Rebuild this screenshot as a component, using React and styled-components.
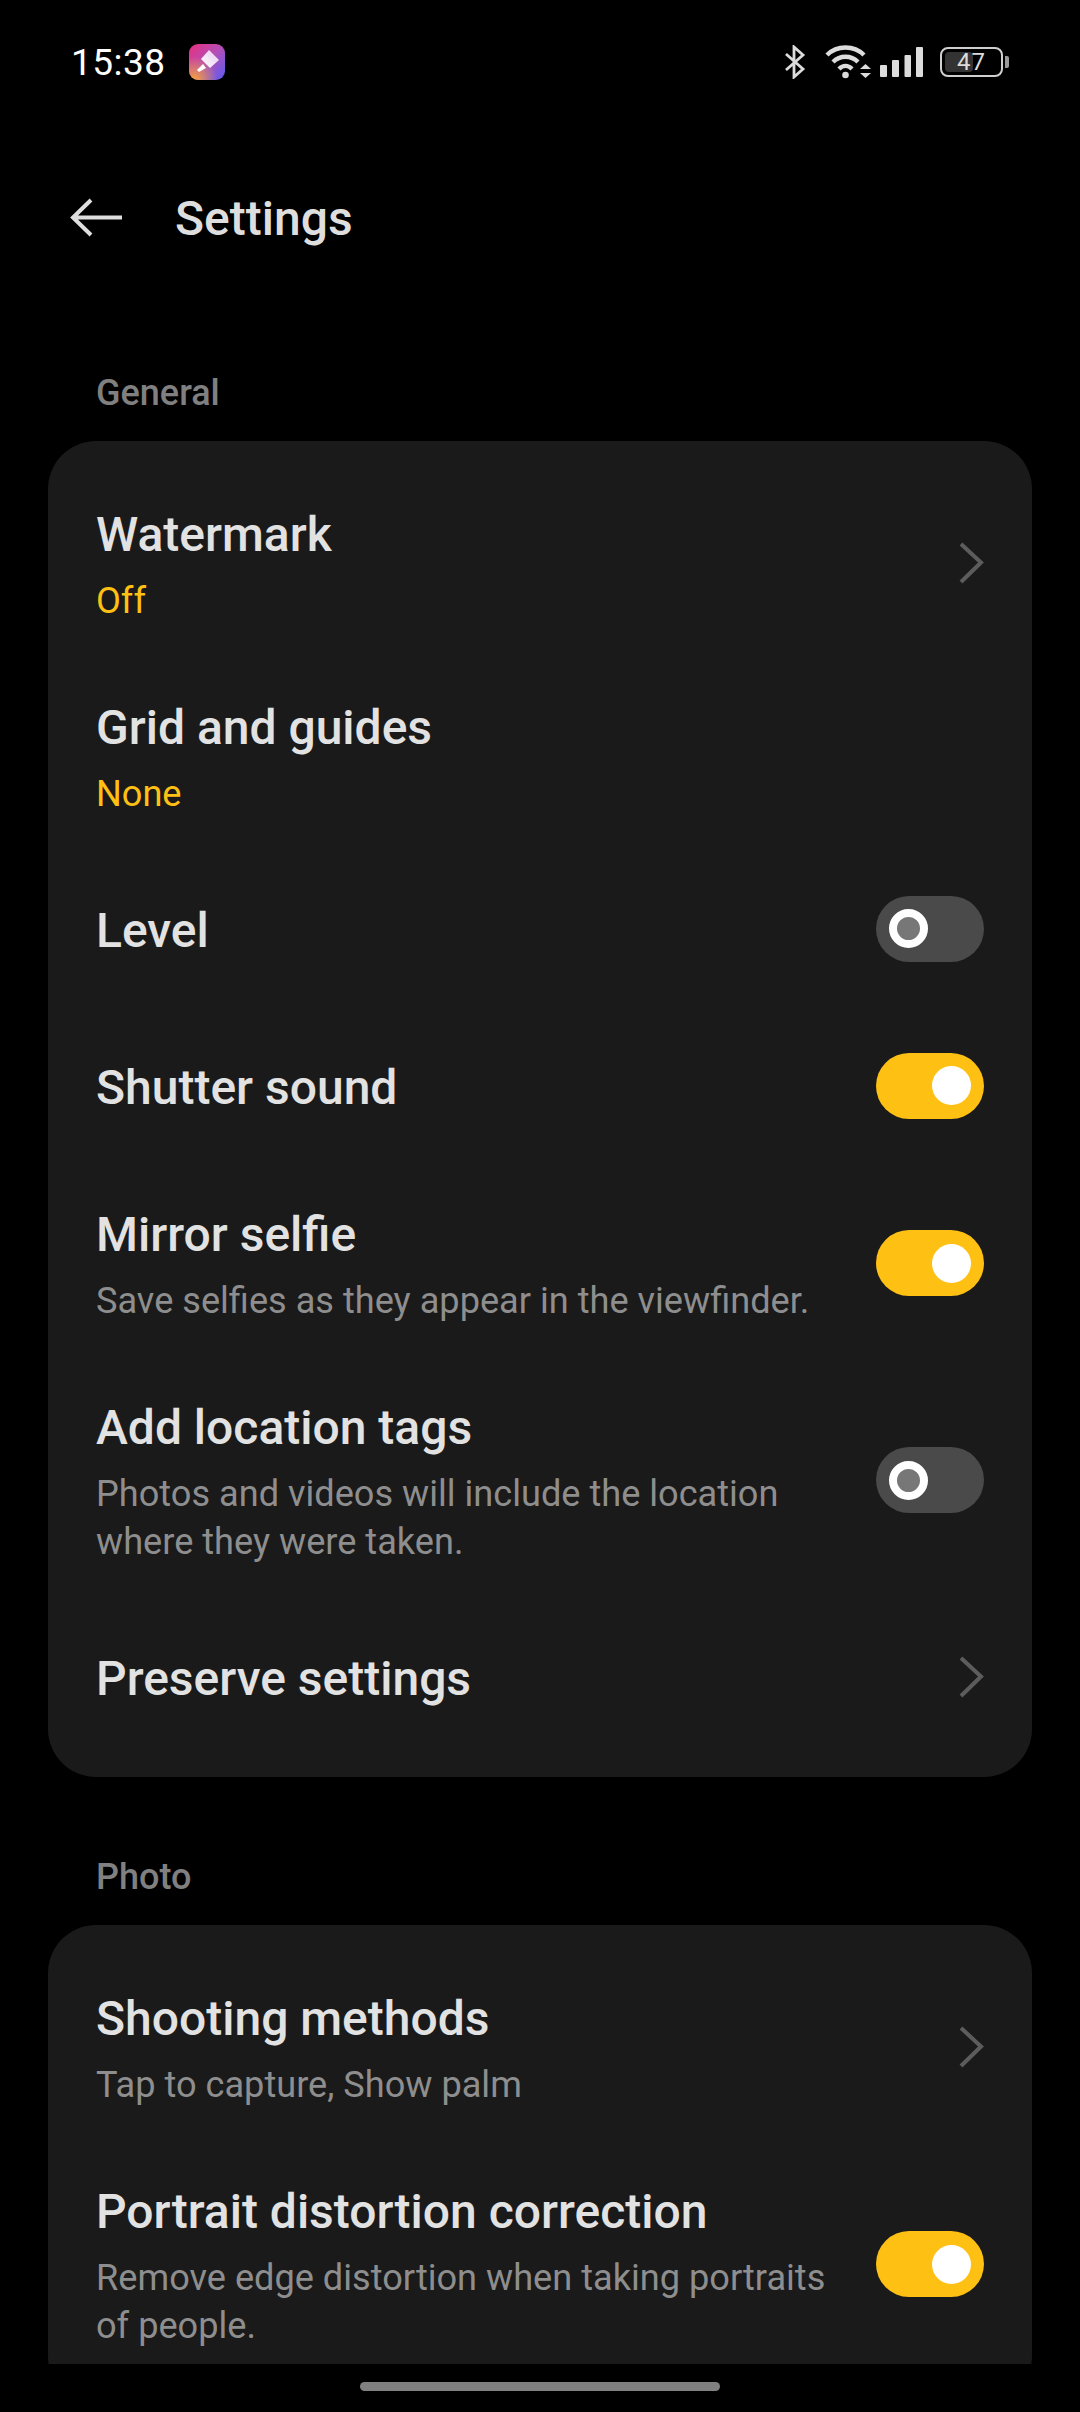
import React from "react";
import styled, { createGlobalStyle } from "styled-components";

const Global = createGlobalStyle`
  html, body { margin: 0; padding: 0; background: #000; }
  * { box-sizing: border-box; }
`;
const Screen = styled.div`
  width: 1080px; height: 2412px; background: #000; display: flex; flex-direction: column;
  overflow: hidden; font-family: Roboto, "Noto Sans", sans-serif;
`;
const StatusBar = styled.div`
  height: 124px; flex: none; display: flex; align-items: center; justify-content: space-between;
  padding: 0 71px 0 71px; color: #fff;
`;
const StatusLeft = styled.div`display: flex; align-items: center; gap: 23px;`;
const Time = styled.span`font-size: 37px; font-weight: 400; line-height: 44px; letter-spacing: 0.5px; padding-top: 1px;`;
const StatusRight = styled.div`display: flex; align-items: center;`;
const Header = styled.header`
  height: 247px; flex: none; display: flex; align-items: flex-start; padding: 65px 0 0 70px;
`;
const Title = styled.h1`
  margin: 0 0 0 53px; font-size: 48px; line-height: 60px; font-weight: 500; color: #dedede;
`;
const Scroll = styled.main`flex: 1; min-height: 0; overflow: hidden; padding: 0 48px;`;
const SectionLabel = styled.div`
  font-size: 36px; line-height: 44px; font-weight: 500; color: #808080; padding-left: 48px;
  margin-top: ${p => p.$top || 0}px; margin-bottom: 26px;
`;
const Card = styled.section`
  background: #1a1a1a; border-radius: 48px; padding: 23px 0 22px;
`;
const Row = styled.div`
  display: flex; align-items: center; justify-content: space-between;
  padding: ${p => p.$single ? "36px 48px 32px" : "41px 48px 32px"};
  min-height: 157px;
`;
const RowText = styled.div`display: flex; flex-direction: column; max-width: 750px;`;
const RowTitle = styled.div`font-size: 48px; line-height: 60px; font-weight: 500; color: #e2e2e2;`;
const RowSub = styled.div`
  font-size: 36.15px; line-height: 48px; margin-top: 12px; color: ${p => p.$accent ? "#ffc014" : "#8e8e8e"};
`;
const Track = styled.div`
  width: 108px; height: 66px; border-radius: 33px; flex: none; display: flex; align-items: center;
  margin-bottom: 4px;
  background: ${p => p.$on ? "#ffc014" : "#4a4a4a"};
  padding: ${p => p.$on ? "0 13px 0 56px" : "0 56px 0 13px"};
`;
const Knob = styled.div`
  width: 39px; height: 39px; border-radius: 50%; flex: none;
  background: ${p => p.$on ? "#fff" : "#777"};
  border: ${p => p.$on ? "none" : "8px solid #fff"};
`;
const NavArea = styled.div`height: 48px; flex: none; display: flex; justify-content: center; padding-top: 18px;`;
const HomeBar = styled.div`width: 360px; height: 9px; border-radius: 5px; background: #808080;`;

const Toggle = ({ on }) => <Track $on={on}><Knob $on={on} /></Track>;
const Chevron = () => (
  <svg width="26" height="44" viewBox="0 0 26 44" fill="none" style={{ flex: "none", marginBottom: 4 }}>
    <path d="M3 3 L23 21.5 L3 41" stroke="#5c5c5c" strokeWidth="4" />
  </svg>
);
const BackArrow = () => (
  <svg width="52" height="40" viewBox="0 0 52 40" fill="none" style={{ flex: "none", marginTop: 9 }}>
    <path d="M21 2 L3 19.500 L21 37 M3 19.500 H52" stroke="#dedede" strokeWidth="4" />
  </svg>
);
const AppBadge = () => (
  <svg width="36" height="36" viewBox="0 0 36 36">
    <defs>
      <linearGradient id="g1" x1="0" y1="0" x2="1" y2="1">
        <stop offset="0" stopColor="#ea2f7e" />
        <stop offset="0.5" stopColor="#b24fb8" />
        <stop offset="1" stopColor="#5b5cf4" />
      </linearGradient>
      <radialGradient id="g2" cx="0.15" cy="1" r="0.65">
        <stop offset="0" stopColor="#f7a13c" />
        <stop offset="1" stopColor="#f7a13c" stopOpacity="0" />
      </radialGradient>
      <linearGradient id="g3" x1="0" y1="1" x2="1" y2="0">
        <stop offset="0" stopColor="#fff" />
        <stop offset="1" stopColor="#e8c8ee" />
      </linearGradient>
    </defs>
    <rect width="36" height="36" rx="9" fill="url(#g1)" />
    <rect width="36" height="36" rx="9" fill="url(#g2)" />
    <path d="M20 6 L30 16 L21 24 L12 15 Z" fill="url(#g3)" />
    <path d="M14 20 L17 24 L10 28 L8 26 Z" fill="#fff" />
  </svg>
);
const Bluetooth = () => (
  <svg width="22" height="34" viewBox="0 0 22 34" fill="none" style={{ marginRight: 19 }}>
    <path d="M2 9 L19 24 L10 32 V2 L19 10 L2 25" stroke="#dcdcdc" strokeWidth="2.8" />
  </svg>
);
const Wifi = () => (
  <svg width="46" height="36" viewBox="0 0 46 36" fill="none" style={{ marginRight: 9 }}>
    <path d="M2 11 C12 1 29 1 39 11" stroke="#dcdcdc" strokeWidth="4.4" />
    <path d="M8 18 C15 11 26 11 33 18" stroke="#dcdcdc" strokeWidth="4.4" />
    <path d="M14 25 C18 21 23 21 27 25" stroke="#dcdcdc" strokeWidth="4.4" />
    <circle cx="20.500" cy="31" r="3.3" fill="#dcdcdc" />
    <path d="M35 25 L40.500 20 L46 25 Z M35 29 H46 L40.500 34 Z" fill="#dcdcdc" />
  </svg>
);
const Signal = () => (
  <svg width="44" height="30" viewBox="0 0 44 30" style={{ marginRight: 16 }}>
    <rect x="0" y="18" width="7" height="12" rx="1" fill="#dcdcdc" />
    <rect x="12" y="13" width="7" height="17" rx="1" fill="#dcdcdc" />
    <rect x="24.500" y="8" width="6.500" height="22" rx="1" fill="#dcdcdc" />
    <rect x="36" y="0" width="7" height="30" rx="1" fill="#dcdcdc" />
  </svg>
);
const BatteryWrap = styled.div`
  position: relative; width: 63px; height: 30px; border: 2px solid #cfcfcf; border-radius: 8px;
  display: flex; align-items: center; justify-content: center; padding: 3px;
`;
const BatteryFill = styled.div`position: absolute; left: 3px; top: 3px; bottom: 3px; width: 47%; background: #333; border-radius: 4px;`;
const BatteryText = styled.span`position: relative; font-size: 24px; line-height: 24px; color: #dcdcdc; letter-spacing: 1px;`;
const BatteryNub = styled.div`width: 4px; height: 12px; background: #9a9a9a; margin-left: 2px; border-radius: 0 2px 2px 0;`;

const Item = ({ title, sub, accent, right }) => (
  <Row $single={!sub}>
    <RowText>
      <RowTitle>{title}</RowTitle>
      {sub && <RowSub $accent={accent}>{sub}</RowSub>}
    </RowText>
    {right}
  </Row>
);

export default function App() {
  return (
    <Screen>
      <Global />
      <StatusBar>
        <StatusLeft>
          <Time>15:38</Time>
          <AppBadge />
        </StatusLeft>
        <StatusRight>
          <Bluetooth />
          <Wifi />
          <Signal />
          <BatteryWrap>
            <BatteryFill />
            <BatteryText>47</BatteryText>
          </BatteryWrap>
          <BatteryNub />
        </StatusRight>
      </StatusBar>
      <Header>
        <BackArrow />
        <Title>Settings</Title>
      </Header>
      <Scroll>
        <SectionLabel>General</SectionLabel>
        <Card>
          <Item title="Watermark" sub="Off" accent right={<Chevron />} />
          <Item title="Grid and guides" sub="None" accent />
          <Item title="Level" right={<Toggle />} />
          <Item title="Shutter sound" right={<Toggle on />} />
          <Item title="Mirror selfie" sub="Save selfies as they appear in the viewfinder." right={<Toggle on />} />
          <Item title="Add location tags" sub={<>Photos and videos will include the location<br />where they were taken.</>} right={<Toggle />} />
          <Item title="Preserve settings" right={<Chevron />} />
        </Card>
        <SectionLabel $top={78}>Photo</SectionLabel>
        <Card>
          <Item title="Shooting methods" sub="Tap to capture, Show palm" right={<Chevron />} />
          <Item title="Portrait distortion correction" sub={<>Remove edge distortion when taking portraits<br />of people.</>} right={<Toggle on />} />
        </Card>
      </Scroll>
      <NavArea><HomeBar /></NavArea>
    </Screen>
  );
}
